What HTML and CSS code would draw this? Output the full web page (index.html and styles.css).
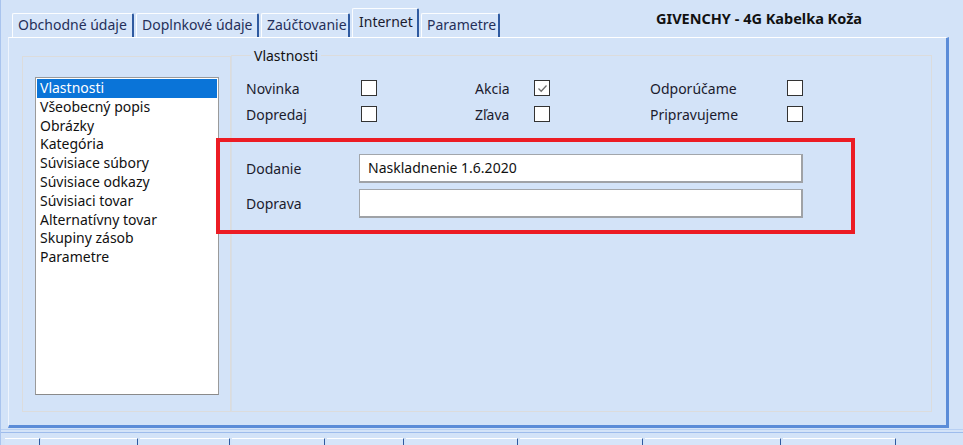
FILE: index.html
```html
<!DOCTYPE html>
<html lang="sk">
<head>
    <meta charset="UTF-8">
    <title>Internet - GIVENCHY</title>
    <link rel="stylesheet" href="styles.css">
</head>
<body>
    <div class="window">
        <!-- Tabs -->
        <div class="tabbar">
            <div class="tabs">
                <div class="tab w1">Obchodné údaje</div>
                <div class="tab w2">Doplnkové údaje</div>
                <div class="tab w3">Zaúčtovanie</div>
                <div class="tab w4 active">Internet</div>
                <div class="tab w5">Parametre</div>
            </div>
            <div class="title">GIVENCHY - 4G Kabelka Koža</div>
        </div>

        <div class="page">
            <div class="group left-group">
                <ul class="listbox">
                    <li class="selected">Vlastnosti</li>
                    <li>Všeobecný popis</li>
                    <li>Obrázky</li>
                    <li>Kategória</li>
                    <li>Súvisiace súbory</li>
                    <li>Súvisiace odkazy</li>
                    <li>Súvisiaci tovar</li>
                    <li>Alternatívny tovar</li>
                    <li>Skupiny zásob</li>
                    <li>Parametre</li>
                </ul>
            </div>

            <fieldset class="group props">
                <legend>Vlastnosti</legend>
                <div class="checks">
                    <span class="lbl">Novinka</span><span class="cb"></span>
                    <span class="lbl">Akcia</span><span class="cb checked"><svg viewBox="0 0 13 13" width="13" height="13"><path d="M2.5 6.5 L5.2 9.2 L10.5 3.5" fill="none" stroke="#6e6e6e" stroke-width="1.3"/></svg></span>
                    <span class="lbl">Odporúčame</span><span class="cb"></span>

                    <span class="lbl">Dopredaj</span><span class="cb"></span>
                    <span class="lbl">Zľava</span><span class="cb"></span>
                    <span class="lbl">Pripravujeme</span><span class="cb"></span>
                </div>

                <div class="fields">
                    <div class="field-row">
                        <span class="lbl">Dodanie</span>
                        <div class="textbox">Naskladnenie 1.6.2020</div>
                    </div>
                    <div class="field-row">
                        <span class="lbl">Doprava</span>
                        <div class="textbox"></div>
                    </div>
                </div>
            </fieldset>

            <!-- highlight drawn over the form -->
            <div class="highlight"></div>
        </div>

        <div class="bottom-strip">
            <div class="stub s1"></div>
            <div class="stub s2"></div>
            <div class="stub s3"></div>
            <div class="stub s4"></div>
            <div class="stub s5"></div>
            <div class="stub s6"></div>
            <div class="stub s7"></div>
            <div class="stub s8"></div>
            <div class="stub s9"></div>
        </div>
    </div>
</body>
</html>
```

FILE: styles.css
```css
/* General */
body {
    margin: 0;
    padding: 0;
    font-family: 'Noto Sans', 'Open Sans', sans-serif;
    font-size: 14px;
    color: #1b1b2e;
    background-color: #d3e3f8;
}

.window {
    width: 963px;
    height: 445px;
    overflow: hidden;
    position: relative;
    background-color: #d3e3f8;
    border-left: 1px solid #a9c4ee;
    box-sizing: border-box;
}

/* Tab strip */
.tabbar {
    display: flex;
    height: 37px;
    padding-left: 11px;
    box-sizing: border-box;
}

.tabs {
    display: flex;
    align-items: flex-end;
    gap: 2px;
}

.tab {
    height: 24px;
    box-sizing: border-box;
    padding-left: 5px;
    line-height: 22px;
    color: #25305a;
    background-color: #d6e5f9;
    border-top: 1px solid #fbfdff;
    border-left: 1px solid #fbfdff;
    border-right: 2px solid #2f5aa0;
    border-radius: 2px 2px 0 0;
    white-space: nowrap;
}

.tab.active {
    height: 29px;
    line-height: 26px;
    color: #1b1b2e;
    background-color: #d3e3f8;
    padding-left: 6px;
}

.w1 { width: 122px; }
.w2 { width: 123px; }
.w3 { width: 89px; }
.w4 { width: 67px; }
.w5 { width: 79px; }

.title {
    margin-left: 156px;
    padding-top: 8px;
    font-weight: bold;
    font-size: 14.5px;
    color: #111;
}

/* Tab page */
.page {
    position: relative;
    margin-left: 7px;
    width: 941px;
    height: 391px;
    box-sizing: border-box;
    border-top: 1px solid #ffffff;
    border-left: 1px solid #eef4fd;
    border-right: 3px solid #5b8cd8;
    border-bottom: 3px solid #5b8cd8;
    display: flex;
    padding: 18px 0 0 13px;
}

.group {
    border: 1px solid #dcdcdc;
    box-sizing: border-box;
}

.left-group {
    width: 209px;
    height: 356px;
    padding: 20px 0 0 12px;
}

.listbox {
    list-style: none;
    margin: 0;
    padding: 1px;
    width: 184px;
    height: 318px;
    box-sizing: border-box;
    background-color: #fff;
    border: 1px solid #9a9a9a;
    border-bottom-color: #8a8a8a;
}

.listbox li {
    height: 18.8px;
    line-height: 18.8px;
    padding-left: 3px;
    color: #111;
    white-space: nowrap;
}

.listbox li.selected {
    background-color: #0a74d8;
    color: #fff;
}

/* Vlastnosti group */
.props {
    margin: -10px 0 0 0;
    width: 701px;
    height: 366px;
    padding: 10px 0 0 14px;
    border-left-color: #d6dde6;
}

.props legend {
    padding: 0 3px;
    margin-left: 5px;
    color: #111;
}

.checks {
    display: grid;
    grid-template-columns: 115px 16px 98px 59px 16px 100px 137px 16px;
    grid-auto-rows: 26px;
    align-items: center;
}

.checks .lbl:nth-child(3),
.checks .lbl:nth-child(9) {
    grid-column: 4;
}

.checks .lbl:nth-child(5),
.checks .lbl:nth-child(11) {
    grid-column: 7;
}

.cb {
    width: 16px;
    height: 16px;
    box-sizing: border-box;
    background-color: #fff;
    border: 1px solid #333;
    display: flex;
    align-items: center;
    justify-content: center;
}

.fields {
    margin-top: 27px;
    display: flex;
    flex-direction: column;
    gap: 6px;
}

.field-row {
    display: flex;
    align-items: center;
}

.field-row .lbl {
    width: 113px;
}

.textbox {
    width: 444px;
    height: 29px;
    box-sizing: border-box;
    background-color: #fff;
    border: 1px solid #a2a6ab;
    border-bottom: 2px solid #9fa2a6;
    border-right: 2px solid #9fa2a6;
    padding-left: 8px;
    line-height: 26px;
    color: #111;
}

.highlight {
    position: absolute;
    left: 207px;
    top: 100px;
    width: 639px;
    height: 96px;
    box-sizing: border-box;
    border: 4px solid #ec1c24;
}

/* Bottom strip with next tab row */
.bottom-strip {
    position: relative;
    height: 17px;
    border-top: 1px solid #b8d0f3;
    margin-top: 1px;
}

.bottom-strip::before {
    content: "";
    position: absolute;
    left: 0;
    right: 0;
    top: 2px;
    border-top: 1px solid #9ebcec;
}

.stub {
    position: absolute;
    top: 8px;
    height: 10px;
    border-top: 1px solid #fff;
    border-right: 1px solid #2f5aa0;
    background-color: #d6e5f9;
}

.s1 { left: 4px; width: 34px; }
.s2 { left: 40px; width: 96px; }
.s3 { left: 139px; width: 89px; }
.s4 { left: 231px; width: 92px; }
.s5 { left: 326px; width: 76px; }
.s6 { left: 405px; width: 111px; }
.s7 { left: 519px; width: 122px; }
.s8 { left: 644px; width: 135px; }
.s9 { left: 782px; width: 112px; }
```
